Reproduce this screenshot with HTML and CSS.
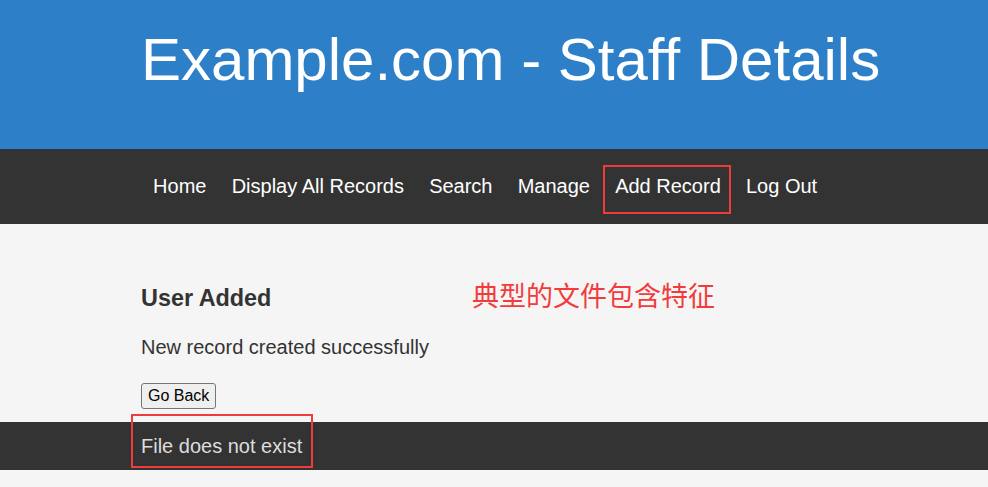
FILE: index.html
```html
<!DOCTYPE html>
<html lang="en">
<head>
<meta charset="utf-8">
<title>Example.com - Staff Details</title>
<link rel="stylesheet" href="styles.css">
</head>
<body>
<header class="site-header">
  <h1 class="site-title">Example.com - Staff Details</h1>
</header>
<nav class="site-nav">
  <a class="nav-link" href="#">Home</a>
  <a class="nav-link" href="#">Display All Records</a>
  <a class="nav-link" href="#">Search</a>
  <a class="nav-link" href="#">Manage</a>
  <a class="nav-link nav-link-marked" href="#">Add Record</a>
  <a class="nav-link" href="#">Log Out</a>
</nav>
<main class="content">
  <h3 class="content-title">User Added</h3>
  <p class="content-text">New record created successfully</p>
  <button class="back-button" type="button">Go Back</button>
  <div class="annotation-note">典型的文件包含特征</div>
</main>
<footer class="site-footer">
  <span class="footer-text">File does not exist</span>
</footer>
<div class="bottom-space"></div>
</body>
</html>
```

FILE: styles.css
```css
html, body {
  margin: 0;
  padding: 0;
  background: #f5f5f5;
  font-family: "Liberation Sans", Arial, sans-serif;
}

body {
  width: 988px;
}

.site-header {
  background: #2d7fc7;
  height: 149px;
  box-sizing: border-box;
  padding: 25px 0 0 141px;
}

.site-title {
  margin: 0;
  font-size: 60px;
  line-height: 69px;
  font-weight: normal;
  color: #ffffff;
}

.site-nav {
  background: #333333;
  height: 75px;
  box-sizing: border-box;
  padding-left: 140.5px;
  display: flex;
  align-items: center;
}

.nav-link {
  color: #ffffff;
  text-decoration: none;
  font-size: 20px;
  line-height: 23px;
  padding: 0 12.6px;
}

.nav-link-marked {
  position: relative;
}

.nav-link-marked::after {
  content: "";
  position: absolute;
  left: 0;
  top: -10px;
  width: 128px;
  height: 49px;
  box-sizing: border-box;
  border: 2px solid #ef3b3b;
}

.content {
  position: relative;
  height: 198px;
  box-sizing: border-box;
  padding: 61px 0 0 141px;
  color: #333333;
}

.content-title {
  margin: 0;
  font-size: 23.4px;
  line-height: 27px;
  font-weight: bold;
}

.content-text {
  margin: 24px 0 0;
  font-size: 20px;
  line-height: 23px;
}

.back-button {
  display: block;
  margin-top: 24px;
  height: 26px;
  box-sizing: border-box;
  padding: 0 6px;
  font-family: "Liberation Sans", Arial, sans-serif;
  font-size: 16px;
  color: #000000;
  background: #efefef;
  border: 1px solid #767676;
  border-radius: 3px;
}

.annotation-note {
  position: absolute;
  left: 472px;
  top: 53px;
  font-family: "Noto Sans CJK SC", sans-serif;
  font-size: 27px;
  line-height: 36px;
  color: #f23c3c;
}

.site-footer {
  position: relative;
  background: #333333;
  height: 48px;
  box-sizing: border-box;
  padding-left: 141px;
  display: flex;
  align-items: center;
}

.site-footer::after {
  content: "";
  position: absolute;
  left: 131px;
  top: -8px;
  width: 182px;
  height: 54px;
  box-sizing: border-box;
  border: 2px solid #ef3b3b;
}

.footer-text {
  color: #dddddd;
  font-size: 20px;
  line-height: 23px;
}

.bottom-space {
  height: 17px;
}
```
